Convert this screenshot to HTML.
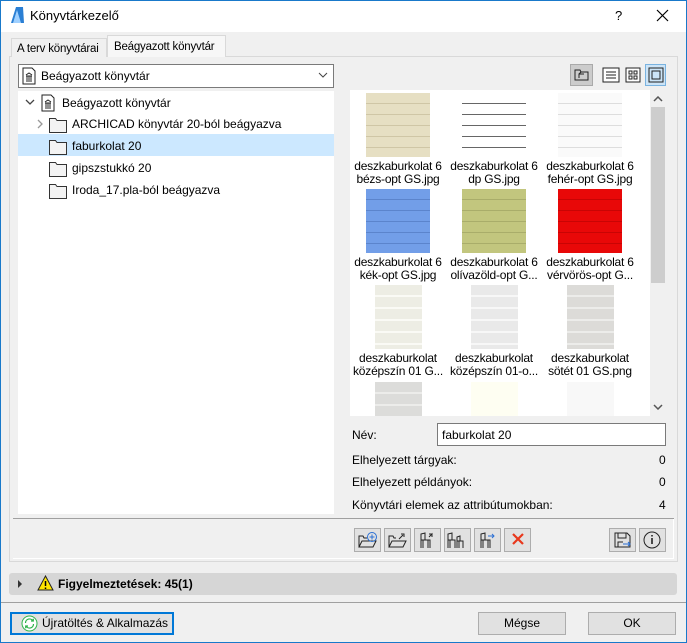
<!DOCTYPE html>
<html><head><meta charset="utf-8"><style>
*{box-sizing:border-box;margin:0;padding:0}
body{width:687px;height:643px;overflow:hidden;background:#f0f0f0;font-family:"Liberation Sans","DejaVu Sans",sans-serif;font-size:12px;color:#000;position:relative}
.a{position:absolute;white-space:nowrap}
.win{position:absolute;left:0;top:0;width:687px;height:643px;border:1px solid #1979ca;pointer-events:none}
.title{left:1px;top:1px;width:685px;height:31px;background:#fff}
.btn{background:#e1e1e1;border:1px solid #adadad;text-align:center;line-height:21px}
.ib{width:27px;height:24px;background:#e1e1e1;border:1px solid #adadad}
.thumb{width:64px;height:64px}
.cap{width:96px;text-align:center;font-size:12px;line-height:13px;letter-spacing:-0.2px}
</style></head><body>
<div class="a title"></div>
<svg class="a" style="left:9px;top:6px" width="16" height="18"><path d="M2 17 L7 1 L14 1 L15 17 Z" fill="#2a7fd4"/><path d="M4 17 L8 4 L12 17Z" fill="#9fd0ff"/></svg>
<div class="a" style="left:30px;top:8px;font-size:13px">Könyvtárkezelő</div>
<div class="a" style="left:615px;top:8px;font-size:13px">?</div>
<svg class="a" style="left:656px;top:9px" width="13" height="13"><path d="M1 1L12 12M12 1L1 12" stroke="#000" stroke-width="1.2"/></svg>

<!-- tabs -->
<div class="a" style="left:9px;top:56px;width:669px;height:506px;border:1px solid #d9d9d9;background:#f0f0f0"></div>
<div class="a" style="left:11px;top:38px;width:96px;height:19px;border:1px solid #d9d9d9;border-bottom:none;background:#f0f0f0;padding:4px 0 0 5px;font-size:11.5px;letter-spacing:-0.2px">A terv könyvtárai</div>
<div class="a" style="left:107px;top:35px;width:119px;height:22px;border:1px solid #d9d9d9;border-bottom:none;background:#f7f7f7;padding:5px 0 0 6px;font-size:11.5px;letter-spacing:-0.2px">Beágyazott könyvtár</div>

<!-- dropdown -->
<div class="a" style="left:18px;top:64px;width:316px;height:24px;border:1px solid #7a7a7a;background:#fff"></div>
<svg class="a" style="left:22px;top:67px" width="14" height="18"><path d="M1 1H10L13 4V17H1Z" fill="#fff" stroke="#222"/><path d="M4 8L7 6L10 8M4 9H10M5 9V13M7 9V13M9 9V13M4 14H10" stroke="#222" fill="none"/></svg>
<div class="a" style="left:41px;top:69px">Beágyazott könyvtár</div>
<svg class="a" style="left:318px;top:72px" width="10" height="7"><path d="M1 1L5 5L9 1" stroke="#444" fill="none"/></svg>

<!-- tree -->
<div class="a" style="left:18px;top:91px;width:316px;height:423px;background:#fff"></div>
<div class="a" style="left:18px;top:134px;width:316px;height:22px;background:#cce8ff"></div>
<svg class="a" style="left:25px;top:98px" width="10" height="8"><path d="M1 2L5 6L9 2" stroke="#444" stroke-width="1.3" fill="none"/></svg>
<svg class="a" style="left:41px;top:94px" width="14" height="18"><path d="M1 1H10L13 4V17H1Z" fill="#fff" stroke="#222"/><path d="M4 8L7 6L10 8M4 9H10M5 9V13M7 9V13M9 9V13M4 14H10" stroke="#222" fill="none"/></svg>
<div class="a" style="left:62px;top:96px">Beágyazott könyvtár</div>
<svg class="a" style="left:36px;top:119px" width="8" height="10"><path d="M2 1L6 5L2 9" stroke="#999" stroke-width="1.3" fill="none"/></svg>
<svg class="a" style="left:48px;top:115px" width="20" height="90" fill="#f3f3f3" stroke="#333">
 <path d="M1.5 3.5H7.5L9 5.5H18.5V17.5H1.5Z"/>
 <path d="M1.5 25.5H7.5L9 27.5H18.5V39.5H1.5Z"/>
 <path d="M1.5 47.5H7.5L9 49.5H18.5V61.5H1.5Z"/>
 <path d="M1.5 69.5H7.5L9 71.5H18.5V83.5H1.5Z"/>
</svg>
<div class="a" style="left:72px;top:117px">ARCHICAD könyvtár 20-ból beágyazva</div>
<div class="a" style="left:72px;top:139px">faburkolat 20</div>
<div class="a" style="left:72px;top:161px">gipszstukkó 20</div>
<div class="a" style="left:72px;top:183px">Iroda_17.pla-ból beágyazva</div>

<!-- right toolbar -->
<div class="a" style="left:570px;top:64px;width:23px;height:22px;background:#ccc;border:1px solid #aaa"></div>
<svg class="a" style="left:574px;top:68px" width="16" height="14"><path d="M1 2H6L7 4H14V12H1Z" fill="none" stroke="#222"/><path d="M5 10V6H10M5 6L7 4" stroke="#222" fill="none"/></svg>
<svg class="a" style="left:602px;top:67px" width="18" height="16"><rect x="1" y="1" width="16" height="14" fill="#fff" stroke="#222"/><path d="M4 5H14M4 8H14M4 11H14" stroke="#222"/></svg>
<svg class="a" style="left:625px;top:67px" width="16" height="16"><rect x="1" y="1" width="14" height="14" fill="#fff" stroke="#222"/><rect x="4" y="4" width="3" height="3" fill="none" stroke="#222"/><rect x="9" y="4" width="3" height="3" fill="none" stroke="#222"/><rect x="4" y="9" width="3" height="3" fill="none" stroke="#222"/><rect x="9" y="9" width="3" height="3" fill="none" stroke="#222"/></svg>
<div class="a" style="left:645px;top:64px;width:21px;height:22px;background:#cce4f7;border:1px solid #7ab3e0"></div>
<svg class="a" style="left:648px;top:67px" width="16" height="16"><rect x="1" y="1" width="14" height="14" fill="none" stroke="#222"/><rect x="4" y="4" width="8" height="8" fill="none" stroke="#222"/></svg>

<!-- thumbnails -->
<div class="a" style="left:350px;top:90px;width:316px;height:326px;background:#fff;overflow:hidden">
 <div class="a" style="left:300px;top:0;width:16px;height:326px;background:#f0f0f0"></div>
 <div class="a" style="left:301px;top:17px;width:14px;height:176px;background:#cdcdcd"></div>
 <svg class="a" style="left:303px;top:6px" width="10" height="6"><path d="M1 5L5 1L9 5" stroke="#555" stroke-width="1.5" fill="none"/></svg>
 <svg class="a" style="left:303px;top:314px" width="10" height="6"><path d="M1 1L5 5L9 1" stroke="#555" stroke-width="1.5" fill="none"/></svg>

 <div class="a thumb" style="left:16px;top:3px;background:repeating-linear-gradient(#e6dfc3 0 10px,#cfc6a6 10px 11px)"></div>
 <div class="a thumb" style="left:112px;top:3px;background:repeating-linear-gradient(#fff 0 10px,#666 10px 11px)"></div>
 <div class="a thumb" style="left:208px;top:3px;background:repeating-linear-gradient(#fafafa 0 10px,#ddd 10px 11px)"></div>
 <div class="a cap" style="left:0;top:70px">deszkaburkolat 6<br>bézs-opt GS.jpg</div>
 <div class="a cap" style="left:96px;top:70px">deszkaburkolat 6<br>dp GS.jpg</div>
 <div class="a cap" style="left:192px;top:70px">deszkaburkolat 6<br>fehér-opt GS.jpg</div>

 <div class="a thumb" style="left:16px;top:99px;background:repeating-linear-gradient(#729ee8 0 10px,#5b84cc 10px 11px)"></div>
 <div class="a thumb" style="left:112px;top:99px;background:repeating-linear-gradient(#c2c67e 0 10px,#a9ad6a 10px 11px)"></div>
 <div class="a thumb" style="left:208px;top:99px;background:repeating-linear-gradient(#e80808 0 10px,#c80404 10px 11px)"></div>
 <div class="a cap" style="left:0;top:166px">deszkaburkolat 6<br>kék-opt GS.jpg</div>
 <div class="a cap" style="left:96px;top:166px">deszkaburkolat 6<br>olívazöld-opt G...</div>
 <div class="a cap" style="left:192px;top:166px">deszkaburkolat 6<br>vérvörös-opt G...</div>

 <div class="a" style="left:25px;top:195px;width:47px;height:64px;background:repeating-linear-gradient(#ededE4 0 10px,#fafaf5 10px 12px)"></div>
 <div class="a" style="left:121px;top:195px;width:47px;height:64px;background:repeating-linear-gradient(#e9e9e9 0 10px,#f7f7f7 10px 12px)"></div>
 <div class="a" style="left:217px;top:195px;width:47px;height:64px;background:repeating-linear-gradient(#dcdbd8 0 10px,#ececea 10px 12px)"></div>
 <div class="a cap" style="left:0;top:262px">deszkaburkolat<br>középszín 01 G...</div>
 <div class="a cap" style="left:96px;top:262px">deszkaburkolat<br>középszín 01-o...</div>
 <div class="a cap" style="left:192px;top:262px">deszkaburkolat<br>sötét 01 GS.png</div>

 <div class="a" style="left:25px;top:292px;width:47px;height:40px;background:repeating-linear-gradient(#dcdcda 0 10px,#ececea 10px 12px)"></div>
 <div class="a" style="left:121px;top:292px;width:47px;height:40px;background:#fefef2"></div>
 <div class="a" style="left:217px;top:292px;width:47px;height:40px;background:#f8f8f8"></div>
</div>

<!-- properties -->
<div class="a" style="left:352px;top:428px">Név:</div>
<div class="a" style="left:437px;top:423px;width:229px;height:23px;border:1px solid #7a7a7a;background:#fff;padding:4px 0 0 4px">faburkolat 20</div>
<div class="a" style="left:352px;top:453px">Elhelyezett tárgyak:</div><div class="a" style="left:659px;top:453px">0</div>
<div class="a" style="left:352px;top:475px">Elhelyezett példányok:</div><div class="a" style="left:659px;top:475px">0</div>
<div class="a" style="left:352px;top:498px">Könyvtári elemek az attribútumokban:</div><div class="a" style="left:659px;top:498px">4</div>

<div class="a" style="left:13px;top:518px;width:661px;height:1px;background:#a0a0a0"></div>
<div class="a" style="left:13px;top:519px;width:661px;height:40px;border-bottom:1px solid #fff;border-right:1px solid #fff"></div>

<!-- icon buttons -->
<div class="a ib" style="left:354px;top:528px"></div>
<div class="a ib" style="left:384px;top:528px"></div>
<div class="a ib" style="left:414px;top:528px"></div>
<div class="a ib" style="left:444px;top:528px"></div>
<div class="a ib" style="left:474px;top:528px"></div>
<div class="a ib" style="left:504px;top:528px"></div>
<div class="a ib" style="left:609px;top:528px"></div>
<div class="a ib" style="left:639px;top:528px"></div>
<svg class="a" style="left:354px;top:528px" width="210" height="24" fill="none" stroke="#222">
 <path d="M5 19V8H9L10 10H13M5 19L8 13H22L19 19Z"/><circle cx="18" cy="9" r="4.5" stroke="#2a6fd4"/><path d="M18 6.5V11.5M15.5 9H20.5" stroke="#2a6fd4"/>
 <path d="M35 19V8H39L40 10H42M35 19L38 13H52L49 19Z"/><path d="M45 11L49 7M47 6H50V9"/>
 <path d="M67 20V6L71 5V12H76V20M67 12H76M69 12V20M74 12V20"/><path d="M75 9L78 6V9M78 6H75"/>
 <path d="M94 20V6L98 5V12H101V20M94 12H101M96 12V20M103 20V9L106 8V13H109V20M103 13H109M105 13V20"/>
 <path d="M127 20V6L131 5V12H136V20M127 12H136M129 12V20M134 12V20"/><path d="M134 8H140M138 6L140 8L138 10" stroke="#2a6fd4"/>
 <path d="M159 6L169 16M169 6L159 16" stroke="#e8381c" stroke-width="2.2"/>
</svg>
<svg class="a" style="left:609px;top:528px" width="60" height="24" fill="none" stroke="#222">
 <path d="M6 5H18L21 8V19H6Z M9 5V10H17V5 M9 19V14H14"/><path d="M14 16H21M19 14L21 16L19 18" stroke="#2a6fd4"/>
 <circle cx="43" cy="12" r="8"/><path d="M43 10V16M43 7V8.5" stroke-width="1.6"/>
</svg>

<!-- warnings -->
<div class="a" style="left:9px;top:573px;width:668px;height:22px;background:#d6d6d6;border-radius:3px"></div>
<svg class="a" style="left:17px;top:580px" width="6" height="8"><path d="M1 0L5 4L1 8Z" fill="#333"/></svg>
<svg class="a" style="left:37px;top:575px" width="17" height="16"><path d="M8.5 1L16 15H1Z" fill="#ffe600" stroke="#222"/><path d="M8.5 6V11M8.5 12.5V14" stroke="#000" stroke-width="1.5"/></svg>
<div class="a" style="left:58px;top:577px;font-weight:bold">Figyelmeztetések: 45(1)</div>
<div class="a" style="left:1px;top:602px;width:685px;height:1px;background:#a0a0a0"></div>

<!-- bottom buttons -->
<div class="a btn" style="left:10px;top:612px;width:164px;height:23px;border:2px solid #0078d7;line-height:19px;text-align:left;padding-left:30px">Újratöltés &amp; Alkalmazás</div>
<svg class="a" style="left:21px;top:615px" width="17" height="17"><circle cx="8.5" cy="8.5" r="7.5" fill="#fff" stroke="#2db34a"/><path d="M4.5 8A4 4 0 0 1 12 6M12.5 9A4 4 0 0 1 5 11M10 6H12.3V3.7M7 11H4.7V13.3" fill="none" stroke="#2db34a" stroke-width="1.2"/></svg>
<div class="a btn" style="left:478px;top:612px;width:88px;height:23px">Mégse</div>
<div class="a btn" style="left:588px;top:612px;width:88px;height:23px">OK</div>
<div class="win"></div>
</body></html>
